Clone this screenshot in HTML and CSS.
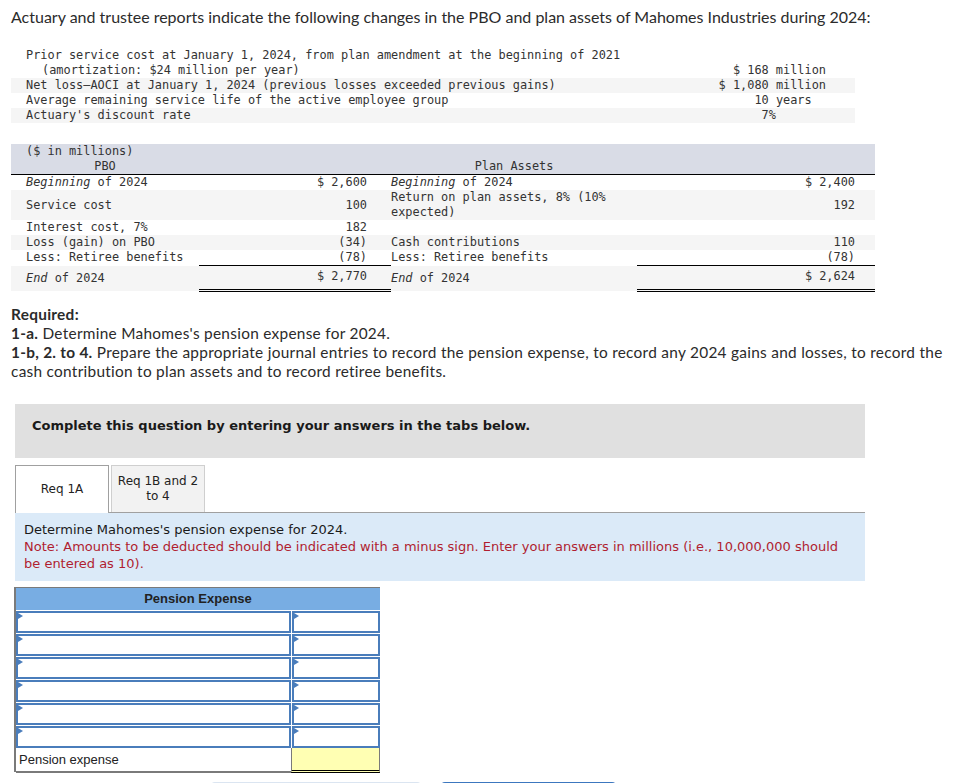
FILE: index.html
```html
<!DOCTYPE html>
<html lang="en">
<head>
<meta charset="utf-8">
<title>Pension expense</title>
<link rel="stylesheet" href="styles.css">
</head>
<body>
<div class="page">
  <p class="intro">Actuary and trustee reports indicate the following changes in the PBO and plan assets of Mahomes Industries during 2024:</p>

  <table class="facts">
    <colgroup><col class="c-lbl"><col class="c-val"></colgroup>
    <tr>
      <td class="lbl">Prior service cost at January 1, 2024, from plan amendment at the beginning of 2021<br><span class="ind">(amortization: $24 million per year)</span></td>
      <td class="val">$ 168 million</td>
    </tr>
    <tr class="sh">
      <td class="lbl">Net loss—AOCI at January 1, 2024 (previous losses exceeded previous gains)</td>
      <td class="val">$ 1,080 million</td>
    </tr>
    <tr>
      <td class="lbl">Average remaining service life of the active employee group</td>
      <td class="val">10 years&nbsp;&nbsp;</td>
    </tr>
    <tr class="sh">
      <td class="lbl">Actuary's discount rate</td>
      <td class="val">7%&nbsp;&nbsp;&nbsp;&nbsp;&nbsp;&nbsp;&nbsp;</td>
    </tr>
  </table>

  <table class="ledger">
    <colgroup><col class="k1"><col class="k2"><col class="k3"><col class="k4"></colgroup>
    <thead>
      <tr class="h1"><th colspan="4">($ in millions)</th></tr>
      <tr class="h2"><th class="ctr">PBO</th><th></th><th class="ctr">Plan Assets</th><th></th></tr>
    </thead>
    <tbody>
      <tr>
        <td class="a"><i>Beginning</i> of 2024</td><td class="b">$ 2,600</td>
        <td class="c"><i>Beginning</i> of 2024</td><td class="d">$ 2,400</td>
      </tr>
      <tr class="sh">
        <td class="a">Service cost</td><td class="b">100</td>
        <td class="c">Return on plan assets, 8% (10% expected)</td><td class="d">192</td>
      </tr>
      <tr>
        <td class="a">Interest cost, 7%</td><td class="b">182</td>
        <td class="c"></td><td class="d"></td>
      </tr>
      <tr class="sh">
        <td class="a">Loss (gain) on PBO</td><td class="b">(34)</td>
        <td class="c">Cash contributions</td><td class="d">110</td>
      </tr>
      <tr class="less">
        <td class="a">Less: Retiree benefits</td><td class="b">(78)</td>
        <td class="c">Less: Retiree benefits</td><td class="d">(78)</td>
      </tr>
      <tr class="sh end">
        <td class="a"><i>End</i> of 2024</td><td class="b">$ 2,770</td>
        <td class="c"><i>End</i> of 2024</td><td class="d">$ 2,624</td>
      </tr>
    </tbody>
  </table>

  <div class="req">
    <p><b>Required:</b></p>
    <p><b>1-a.</b> Determine Mahomes's pension expense for 2024.</p>
    <p><b>1-b, 2. to 4.</b> Prepare the appropriate journal entries to record the pension expense, to record any 2024 gains and losses, to record the cash contribution to plan assets and to record retiree benefits.</p>
  </div>

  <div class="q">
    <div class="notice">Complete this question by entering your answers in the tabs below.</div>

    <div class="tabs">
      <div class="tab active">Req 1A</div>
      <div class="tab">Req 1B and 2<br>to 4</div>
    </div>

    <div class="prompt">
      <div>Determine Mahomes's pension expense for 2024.</div>
      <div class="note">Note: Amounts to be deducted should be indicated with a minus sign. Enter your answers in millions (i.e., 10,000,000 should be entered as 10).</div>
    </div>

    <div class="pe">
      <div class="pe-head">Pension Expense</div>
      <div class="pe-row"><div class="in"></div><div class="in"></div></div>
      <div class="pe-row"><div class="in"></div><div class="in"></div></div>
      <div class="pe-row"><div class="in"></div><div class="in"></div></div>
      <div class="pe-row"><div class="in"></div><div class="in"></div></div>
      <div class="pe-row"><div class="in"></div><div class="in"></div></div>
      <div class="pe-row"><div class="in"></div><div class="in"></div></div>
      <div class="pe-total"><div class="pe-lbl">Pension expense</div><div class="pe-yellow"></div></div>
    </div>

    <div class="btns">
      <div class="btn light"></div>
      <div class="btn dark"></div>
    </div>
  </div>
</div>
</body>
</html>
```
FILE: styles.css
```css
* { box-sizing: border-box; }
html, body { overflow: hidden; }
body {
  margin: 0;
  background: #fff;
  color: #2b2b2b;
  font-family: Lato, "Liberation Sans", sans-serif;
}
.page { padding: 8px 11px 0; }

.intro {
  margin: 0;
  font-size: 16px;
  line-height: 18px;
}

/* facts table */
.facts {
  margin-top: 22px;
  width: 844px;
  border-collapse: collapse;
  font-family: "DejaVu Sans Mono", "Liberation Mono", monospace;
  font-size: 11.9px;
  line-height: 15px;
  color: #333;
}
.facts .c-val { width: 220px; }
.facts td { padding: 0; vertical-align: bottom; }
.facts .lbl { padding-left: 15px; white-space: nowrap; }
.facts .ind { padding-left: 16px; }
.facts .val { text-align: right; padding-right: 29px; white-space: pre; }
.sh { background: #f5f5f5; }

/* ledger table */
.ledger {
  margin-top: 21px;
  width: 864px;
  border-collapse: collapse;
  table-layout: fixed;
  font-family: "DejaVu Sans Mono", "Liberation Mono", monospace;
  font-size: 11.9px;
  line-height: 15px;
  color: #333;
}
.ledger .k1 { width: 188px; }
.ledger .k2 { width: 192px; }
.ledger .k3 { width: 246px; }
.ledger .k4 { width: 238px; }
.ledger th {
  background: #d9dce6;
  font-weight: normal;
  padding: 0;
}
.ledger .h1 th { text-align: left; padding-left: 15px; }
.ledger .h2 th { border-bottom: 1px solid #000; }
.ledger .ctr { text-align: center; }
.ledger td { padding: 0; vertical-align: middle; }
.ledger .a { padding-left: 15px; }
.ledger .b { text-align: right; padding-right: 24px; }
.ledger .c { padding-left: 0; }
.ledger .d { text-align: right; padding-right: 20px; }
.ledger .less .b, .ledger .less .d { border-bottom: 1px solid #000; }
.ledger .end td { height: 25px; }
.ledger .end .b, .ledger .end .d {
  border-bottom: 3px double #000;
  vertical-align: top;
  padding-top: 3px;
}

/* required */
.req {
  margin-top: 13px;
  font-size: 15.4px;
  letter-spacing: 0.28px;
  line-height: 19px;
  color: #2b2b2b;
}
.req p { margin: 0; }

/* question area */
.q { margin: 23px 0 0 4px; width: 850px; }
.notice {
  height: 54px;
  background: #e0e0e0;
  padding: 14px 17px 0;
  font-family: "DejaVu Sans", sans-serif;
  font-weight: bold;
  font-size: 13px;
  line-height: 16px;
  color: #1a1a1a;
}

.tabs {
  margin-top: 7px;
  display: flex;
  gap: 2px;
  height: 48px;
  border-bottom: 1px solid #a0a0a0;
  font-family: "DejaVu Sans", sans-serif;
  font-size: 12px;
  line-height: 15px;
  color: #222;
}
.tab {
  width: 94px;
  height: 47px;
  display: flex;
  align-items: center;
  justify-content: center;
  text-align: center;
  background: #f2f2f2;
  border: 1px solid #cfcfcf;
  border-bottom: none;
}
.tab.active {
  height: 48px;
  margin-bottom: -1px;
  background: #fff;
  border-color: #a0a0a0;
}

.prompt {
  background: #dbeaf8;
  padding: 8px 9px 9px;
  font-family: "DejaVu Sans", sans-serif;
  font-size: 13px;
  line-height: 17px;
  color: #1a1a1a;
}
.prompt .note { color: #b01e30; }

/* pension expense grid */
.pe {
  margin: 6px 0 0 -1px;
  width: 366px;
  border-left: 2px solid #7a7a7a;
  border-top: 1px solid #7a7a7a;
  font-family: "Liberation Sans", Arial, sans-serif;
  font-size: 13px;
  color: #222;
}
.pe-head {
  height: 22px;
  line-height: 22px;
  background: #78ade3;
  text-align: center;
  font-weight: bold;
}
.pe-row {
  display: grid;
  grid-template-columns: 275px 88px;
  gap: 1px;
  height: 22px;
  margin-top: 1px;
}
.in {
  position: relative;
  background: #fff;
  border: 2px solid #4a7dbb;
}
.in::before {
  content: "";
  position: absolute;
  left: 0;
  top: 0;
  border-left: 5px solid #4a7dbb;
  border-top: 3px solid transparent;
  border-bottom: 3px solid transparent;
}
.pe-total {
  display: grid;
  grid-template-columns: 275px 89px;
  height: 24px;
}
.pe-lbl {
  padding-left: 3px;
  line-height: 23px;
  border-bottom: 2px solid #7a7a7a;
}
.pe-yellow {
  background: #ffffb3;
  border-left: 1px solid #7a7a7a;
  border-right: 1px solid #7a7a7a;
  border-bottom: 3px double #000;
}

.btns {
  display: flex;
  gap: 20px;
  margin: 10px 0 0 196px;
}
.btn {
  height: 36px;
  border-radius: 4px;
}
.btn.light { width: 210px; background: #dbe5f1; }
.btn.dark { width: 175px; background: #3c77bf; }
```
